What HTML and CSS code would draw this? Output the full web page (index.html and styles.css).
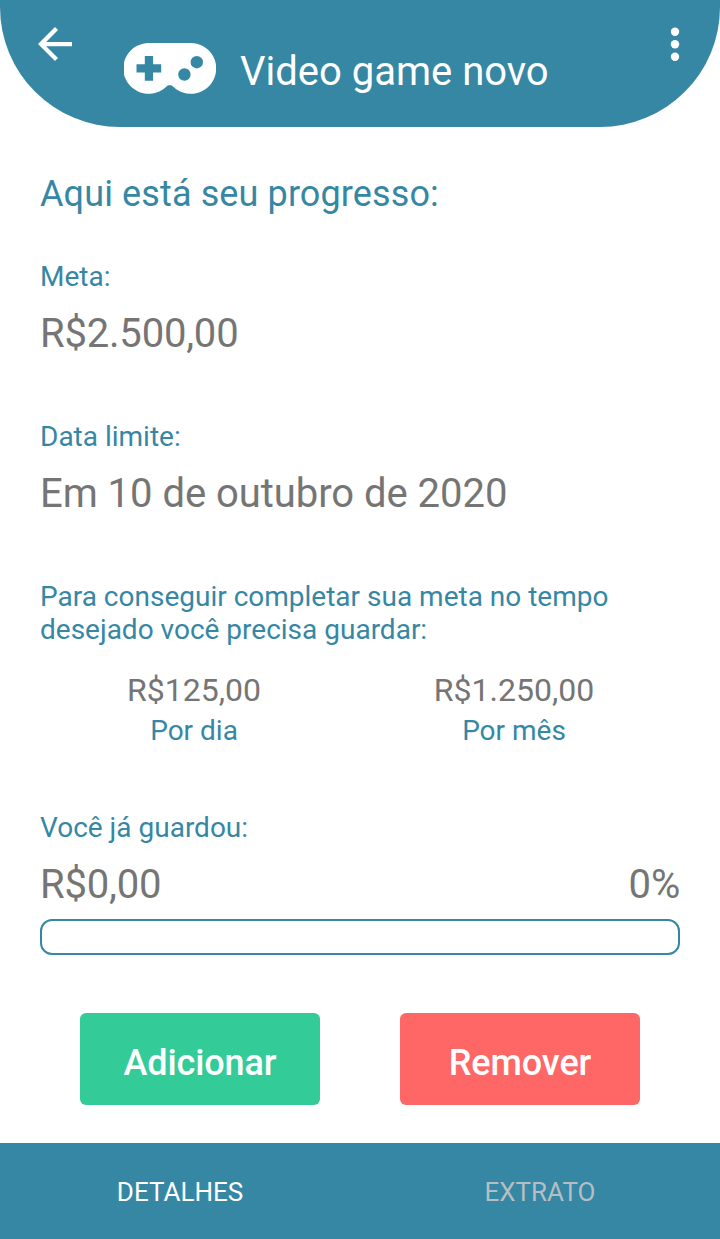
FILE: index.html
```html
<!DOCTYPE html>
<html lang="pt-BR">
<head>
<meta charset="utf-8">
<title>Video game novo</title>
<link rel="stylesheet" href="styles.css">
</head>
<body>
<div class="screen">
  <header class="header">
    <svg class="back" width="34" height="34" viewBox="4 4 16 16" fill="#fff"><path d="M20 11H7.830l5.590-5.590L12 4l-8 8 8 8 1.410-1.410L7.830 13H20z"/></svg>
    <div class="goal">
      <svg class="gamepad" width="92" height="52" viewBox="0 0 92 52"><path fill="#fff" fill-rule="evenodd" d="M25.200 0H66.800A25.400 25.400 0 1 1 49 43.500Q48 42.300 46.500 42.300H45Q43.500 42.300 42.500 43.500A25.400 25.400 0 1 1 25.200 0ZM20.800 13V21.300H12.500V29.500H20.800V37.800H29.100V29.500H37.200V21.300H29.100V13ZM60.400 25.300A6.200 6.200 0 1 0 60.400 37.700A6.200 6.200 0 1 0 60.400 25.300ZM72.800 13A6.200 6.200 0 1 0 72.800 25.400A6.200 6.200 0 1 0 72.800 13Z"/></svg>
      <h1 class="title">Video game novo</h1>
    </div>
    <svg class="more" width="10" height="36" viewBox="0 0 10 36" fill="#fff"><circle cx="5" cy="4.700" r="4.200"/><circle cx="5" cy="17.200" r="4.200"/><circle cx="5" cy="29.700" r="4.200"/></svg>
  </header>
  <main class="content">
    <h2 class="heading">Aqui está seu progresso:</h2>
    <section class="field goal-field"><p class="label">Meta:</p><p class="value money">R$2.500,00</p></section>
    <section class="field"><p class="label">Data limite:</p><p class="value">Em 10 de outubro de 2020</p></section>
    <section class="plan">
      <p class="label">Para conseguir completar sua meta no tempo<br>desejado você precisa guardar:</p>
      <div class="rates">
        <div class="rate"><p class="amount">R$125,00</p><p class="label">Por dia</p></div>
        <div class="rate"><p class="amount">R$1.250,00</p><p class="label">Por mês</p></div>
      </div>
    </section>
    <section class="saved">
      <p class="label">Você já guardou:</p>
      <div class="saved-row"><p class="value money">R$0,00</p><p class="value money">0%</p></div>
      <div class="bar"></div>
    </section>
    <div class="actions"><button class="btn add">Adicionar</button><button class="btn remove">Remover</button></div>
  </main>
  <nav class="tabs"><a class="tab active">DETALHES</a><a class="tab">EXTRATO</a></nav>
</div>
</body>
</html>
```
FILE: styles.css
```css
* { box-sizing: border-box; margin: 0; padding: 0; }
body { font-family: Roboto, sans-serif; background: #fff; }
.screen { width: 720px; height: 1239px; display: flex; flex-direction: column; overflow: hidden; }
.header { height: 127px; flex: none; display: flex; align-items: flex-start; background: #3687a4; border-radius: 0 0 120px 120px; padding: 27px 40px 0 38px; }
.goal { display: flex; flex: 1; margin: 16px 0 0 52px; gap: 24px; }
.title { font-size: 40px; font-weight: 400; line-height: 58px; color: #fff; white-space: nowrap; }
.content { flex: 1; padding: 45px 40px 0; }
.heading { font-size: 36px; line-height: 44px; font-weight: 400; letter-spacing: 0.12px; color: #3687a4; }
.label { font-size: 28px; line-height: 33px; color: #3687a4; }
.value { font-size: 40px; line-height: 48px; letter-spacing: -0.04px; color: #757575; }
.money { letter-spacing: -0.2px; }
.field { margin-top: 60px; height: 100px; }
.field.goal-field { margin-top: 44px; }
.field .value, .saved-row { margin-top: 17px; }
.plan { margin-top: 60px; }
.rates { display: flex; margin: 24px 6px 0 -6px; }
.rate { flex: 1; text-align: center; }
.amount { font-size: 32px; line-height: 40px; margin-bottom: 4px; color: #757575; }
.saved { margin-top: 64px; }
.saved-row { display: flex; justify-content: space-between; }
.bar { height: 36px; margin-top: 10px; border: 2px solid #3687a4; border-radius: 12px; }
.actions { display: flex; gap: 80px; padding: 0 40px; margin-top: 58px; }
.btn { width: 240px; height: 92px; border: 0; border-radius: 6px; font: 500 36px/44px Roboto, sans-serif; letter-spacing: -0.1px; color: #fff; padding-top: 8px; }
.add { background: #33cc99; }
.remove { background: #ff6666; }
.tabs { height: 96px; flex: none; display: flex; align-items: center; background: #3687a4; padding-top: 2px; }
.tab { flex: 1; text-align: center; font-size: 26px; line-height: 32px; color: #b5bec2; }
.tab.active { color: #fff; }
```
